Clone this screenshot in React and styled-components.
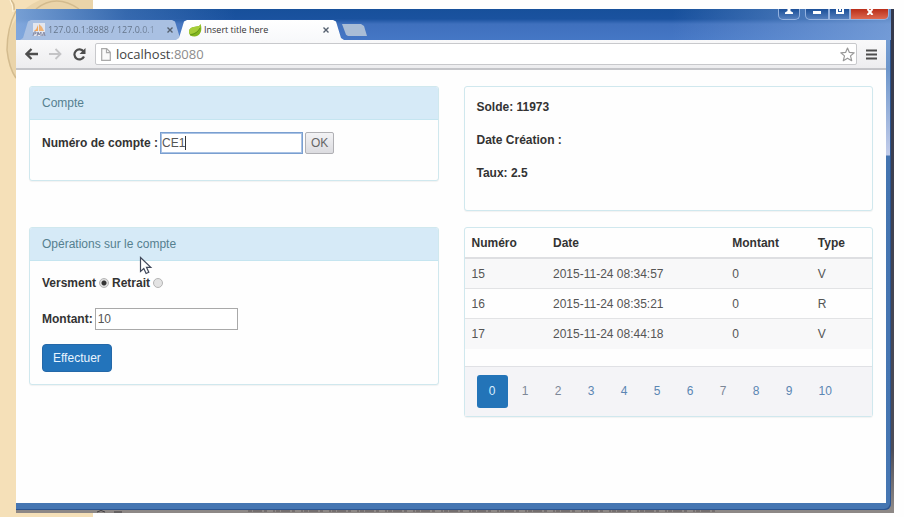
import React, { useState } from "react";
import styled, { createGlobalStyle } from "styled-components";

const GlobalStyle = createGlobalStyle`
  *, *::before, *::after { box-sizing: border-box; }
  body {
    margin: 0;
    background: #fefefe;
    color: #333;
    font: 12px/17px "Liberation Sans", Arial, sans-serif;
  }
  button, input { font: inherit; color: inherit; }
`;

/* Desktop and window */

const Desktop = styled.div`
  display: flex;
  min-height: 100vh;
  padding: 9px 10px 4px 16px;
  position: relative;
  background: linear-gradient(90deg, #f5e0b8 0 93px, #fefefe 93px);
`;

const Ornament = styled.svg`
  position: absolute;
  top: 0;
  left: 0;
  width: 93px;
  height: 100px;
`;

const Shadow = styled.div`
  flex: 1;
  display: flex;
  flex-direction: column;
  position: relative;
  min-width: 0;
  background: linear-gradient(180deg, #33384c 0, #4c4c58 440px, #8d8886 500px);
  padding-right: 3px;
`;

const Backdrop = styled.svg`
  display: block;
  width: 100%;
  height: 3px;
`;

const Window = styled.div`
  flex: 1;
  display: flex;
  flex-direction: column;
  border-radius: 0 0 6px 0;
  background: linear-gradient(180deg, #7ea6dc 0, #6d96cb 60px, #c3cdea 146px, #4474b0 147px, #4676b2 100%);
  padding: 0 5px 7px 0;
  box-shadow: inset -1px -1px 0 #2c5490;
`;

const TitleBar = styled.header`
  display: flex;
  align-items: flex-end;
  height: 31px;
  margin-right: -5px;
  padding-left: 4px;
  background:
    linear-gradient(90deg, rgba(150, 185, 230, 0.75) 0, rgba(120, 160, 215, 0.3) 110px, transparent 220px, transparent 75%, rgba(140, 175, 225, 0.65) 100%),
    linear-gradient(180deg, #17509b 0, #1a529f 10px, #3f70bd 15px, #4577c5 100%);
`;

const Tab = styled.div`
  display: flex;
  align-items: center;
  gap: 2px;
  height: 20px;
  width: ${(p) => (p.$active ? 168 : 163)}px;
  margin-right: ${(p) => (p.$active ? 0 : -7)}px;
  padding: 0 ${(p) => (p.$active ? 12 : 7)}px 0 12px;
  background: ${(p) => (p.$active ? "linear-gradient(#fff, #f8f9fb)" : "#a9c0e2")};
  color: ${(p) => (p.$active ? "#333" : "#65758c")};
  clip-path: polygon(0 100%, 3px 90%, 8px 8%, 11px 0, calc(100% - 11px) 0, calc(100% - 8px) 8%, calc(100% - 3px) 90%, 100% 100%);
  font: 9px/16px "Open Sans", sans-serif;
`;

const TabTitle = styled.span`
  flex: 1;
  white-space: nowrap;
  mask-image: ${(p) => (p.$fade ? "linear-gradient(90deg, #000 80%, rgba(0, 0, 0, 0.3))" : "none")};
`;

const TabClose = styled.button`
  display: flex;
  padding: 3px;
  border: 0;
  background: none;
  color: #55606f;
`;

const NewTab = styled.button`
  width: 25px;
  height: 12px;
  margin: 0 0 4px -2px;
  padding: 0;
  border: 0;
  background: #a9bdd6;
  clip-path: polygon(0 0, 19px 0, 22px 2px, 100% 100%, 6px 100%, 4px 90%);
`;

const Controls = styled.div`
  display: flex;
  align-self: flex-start;
  margin-left: auto;
  padding-right: 2px;
`;

const Control = styled.button`
  display: flex;
  justify-content: center;
  align-items: flex-start;
  width: ${(p) => p.$width}px;
  height: 11px;
  margin-right: ${(p) => (p.$spaced ? 5 : 0)}px;
  padding: 0;
  border: 1px solid #94b2df;
  border-width: 0 1px 1px;
  border-radius: ${(p) => p.$radius};
  background: ${(p) => (p.$danger ? "linear-gradient(#b92d18, #dd6951)" : "linear-gradient(#1b4f98, #547fbd)")};
  color: #fff;
`;

const Toolbar = styled.div`
  display: flex;
  align-items: center;
  height: 30px;
  padding: 3px 7px 3px 7px;
  background: linear-gradient(180deg, #f9f9fa, #ededef);
  border-bottom: 2px solid #c4c5c9;
`;

const ToolButton = styled.button`
  display: flex;
  width: 16px;
  margin-right: 8px;
  padding: 0;
  justify-content: center;
  border: 0;
  background: none;
  color: ${(p) => (p.disabled ? "#c4c4c6" : "#4d4d4d")};
  &:last-child { margin-right: 0; }
`;

const AddressBar = styled.div`
  flex: 1;
  display: flex;
  align-items: center;
  gap: 5px;
  height: 22px;
  margin-right: 6px;
  padding: 0 1px 0 5px;
  border: 1px solid #c8c9cc;
  border-radius: 2px;
  background: #fff;
`;

const Address = styled.span`
  flex: 1;
  color: #444;
  font: 13px/18px "Open Sans", sans-serif;
`;

const Port = styled.span`
  color: #8c8c8c;
`;

/* Page */

const Page = styled.main`
  flex: 1;
  display: grid;
  grid-template-columns: minmax(0, 1fr) minmax(0, 1fr);
  gap: 16px 25px;
  align-content: start;
  align-items: start;
  padding: 16px 13px;
  background: #fefefe;
`;

const Panel = styled.section`
  position: relative;
  border: 1px solid #d0e8ee;
  border-radius: 3px;
  background: #fefefe;
  box-shadow: 0 1px 1px rgba(0, 0, 0, 0.05);
`;

const PanelHeading = styled.h2`
  margin: 0;
  padding: 8px 12px;
  border-bottom: 1px solid #c5e5f0;
  border-radius: 2px 2px 0 0;
  background: #d6eaf7;
  color: #55808f;
  font-size: 12px;
  font-weight: 400;
  line-height: 16px;
`;

const PanelBody = styled.div`
  padding: 12px;
`;

const FormRow = styled.div`
  display: flex;
  align-items: center;
  gap: 2px;
  margin-bottom: 14px;
`;

const RadioRow = styled.div`
  display: flex;
  align-items: center;
  gap: 2px;
  height: 20px;
  margin-bottom: 15px;
`;

const Label = styled.label`
  font-weight: 700;
`;

const InputWrap = styled.span`
  position: relative;
  display: flex;
`;

const TextInput = styled.input`
  width: 143px;
  height: 22px;
  padding: 0 2px;
  border: 1px solid #a9a9a9;
  outline: 0;
  background: #fff;
  color: #555;
  ${(p) => p.$focused && "border-color: #7a9fd0; box-shadow: inset 0 0 0 1px #a9c2e4; padding: 0 1px;"}
`;

const Caret = styled.span`
  position: absolute;
  top: 4px;
  left: 25px;
  width: 1px;
  height: 14px;
  background: #333;
`;

const Radio = styled.input`
  appearance: none;
  width: 10px;
  height: 10px;
  margin: 0 1px;
  border: 1px solid #b5b5b5;
  border-radius: 50%;
  background: #e3e3e3;
  &:checked { background: radial-gradient(circle, #333 0 2px, #dedede 3px); }
`;

const PlainButton = styled.button`
  height: 22px;
  padding: 0 5px;
  border: 1px solid #b0b0b4;
  border-radius: 2px;
  background: linear-gradient(#f3f3f5, #dcdce0);
  color: #666;
`;

const PrimaryButton = styled.button`
  display: block;
  height: 28px;
  padding: 0 10px;
  border: 1px solid #2468a8;
  border-radius: 4px;
  background: #2374bb;
  color: #e9f4ff;
`;

const Fact = styled.p`
  margin: 0 0 16px;
  font-weight: 700;
`;

const Table = styled.table`
  width: 100%;
  margin-bottom: 17px;
  table-layout: fixed;
  border-collapse: separate;
  border-spacing: 0;
`;

const Th = styled.th`
  width: ${(p) => p.$width};
  height: 31px;
  padding: 1px 7px 0;
  border-bottom: 2px solid #dedfe2;
  text-align: left;
`;

const Td = styled.td`
  height: 30px;
  padding: 1px 7px 0;
  border-bottom: 1px solid #e2e3e5;
  color: #555;
  tr:nth-child(odd) > & { background: #f8f8f9; }
  tr:last-child > & { border-bottom: 0; }
`;

const Pagination = styled.nav`
  display: flex;
  gap: 2px;
  padding: 8px 12px;
  border-top: 1px solid #e0e1e5;
  background: #f4f4f7;
`;

const PageLink = styled.a`
  min-width: 31px;
  padding: 8px 12px;
  border-radius: 3px;
  text-align: center;
  text-decoration: none;
  background: ${(p) => (p.$active ? "#2374b8" : "transparent")};
  color: ${(p) => (p.$active ? "#d8efff" : p.$visited ? "#7d8797" : "#5b86b3")};
`;

const Pointer = styled.svg`
  position: absolute;
  left: 109px;
  top: 28px;
  pointer-events: none;
`;

/* Icons */

const CloseGlyph = () => (
  <svg width="6" height="6" viewBox="0 0 6 6" aria-hidden="true">
    <path d="M.5.5l5 5M5.5.5l-5 5" stroke="currentColor" strokeWidth="1.4" />
  </svg>
);

const AdminIcon = () => (
  <svg width="14" height="14" viewBox="0 0 14 14" aria-hidden="true">
    <rect x="1" width="12" height="13" fill="#e3e6ee" />
    <path d="M6 2v6H2q3-2 4-6z" fill="#f2a65a" />
    <path d="M7 1q4 3 5 7H7z" fill="#eeb377" />
    <path d="M1 13l1-4h2q1 2-2 2M5 13l1-4 1 3 2-3v4M10 13l2-4 1 4M11 12h2" fill="none" stroke="#8187a3" />
  </svg>
);

const LeafIcon = () => (
  <svg width="14" height="13" viewBox="0 0 14 13" aria-hidden="true">
    <path d="M1 8C1 3.500 5 3 8.500 2.500 11 2.200 12 1.500 12.700 0 14.500 6 12.500 12.500 6.500 12.500 3 12.500 1 11 1 8z" fill="#82b51f" />
    <path d="M1 8C1 3.500 5 3 8.500 2.500 11 2.200 12 1.500 12.700 0 13 5 9 9 2 10z" fill="#a6cd39" />
    <path d="M2 11Q9 10 12 4" fill="none" stroke="#5d8f18" strokeWidth=".8" />
  </svg>
);

const ArrowIcon = ({ right }) => (
  <svg width="13" height="12" viewBox="0 0 13 12" aria-hidden="true">
    <path
      d={right ? "M0 6h11M6.500 1l5 5-5 5" : "M13 6H2M6.500 1l-5 5 5 5"}
      fill="none"
      stroke="currentColor"
      strokeWidth={right ? 1.8 : 2.3}
    />
  </svg>
);

const ReloadIcon = () => (
  <svg width="13" height="13" viewBox="0 0 13 13" aria-hidden="true">
    <path d="M10.500 3.500A5 5 0 1 0 11 8.500" fill="none" stroke="currentColor" strokeWidth="2.200" />
    <path d="M12.500 0v6h-6z" fill="currentColor" />
  </svg>
);

const FileIcon = () => (
  <svg width="10" height="13" viewBox="0 0 10 13" aria-hidden="true">
    <path d="M.7.7h5L9.300 4.300v8H.7zM5.500.7v4h4" fill="#fafafa" stroke="#a9a9a9" strokeWidth="1.200" />
  </svg>
);

const StarIcon = () => (
  <svg width="15" height="15" viewBox="0 0 15 15" aria-hidden="true">
    <path d="M7.500 1l1.900 4.400 4.800.4-3.700 3.100 1.200 4.800-4.200-2.500-4.200 2.500 1.200-4.800L.8 5.800l4.800-.4z" fill="#fff" stroke="#999" strokeWidth="1.200" strokeLinejoin="round" />
  </svg>
);

const MenuIcon = () => (
  <svg width="11" height="11" viewBox="0 0 11 11" aria-hidden="true">
    <path d="M0 1.500h11M0 5.500h11M0 9.500h11" stroke="currentColor" strokeWidth="2" />
  </svg>
);

const operations = [
  { id: 15, date: "2015-11-24 08:34:57", amount: 0, type: "V" },
  { id: 16, date: "2015-11-24 08:35:21", amount: 0, type: "R" },
  { id: 17, date: "2015-11-24 08:44:18", amount: 0, type: "V" },
];

const pages = [0, 1, 2, 3, 4, 5, 6, 7, 8, 9, 10];
const visitedPages = [1, 2, 7];

export default function App() {
  const [kind, setKind] = useState("V");
  const [account, setAccount] = useState("CE1");

  return (
    <>
      <GlobalStyle />
      <Desktop>
        <Ornament viewBox="0 0 93 100" aria-hidden="true">
          <path d="M93 0H40Q8 14 7 48q1 22 9 31h77z" fill="#ead4a9" />
          <path d="M11 0q4 4 3 10M16 11Q7 28 7 50q2 18 9 28M36 9q20-16 43 0" fill="none" stroke="#d3bb8e" strokeWidth="1.500" />
          <path d="M10 0q3 5 3 12" stroke="#fff5dc" fill="none" />
        </Ornament>
        <Shadow>
          <Window>
            <TitleBar>
              <Tab>
                <AdminIcon />
                <TabTitle $fade>127.0.0.1:8888 / 127.0.0.1</TabTitle>
                <TabClose aria-label="Fermer l'onglet"><CloseGlyph /></TabClose>
              </Tab>
              <Tab $active>
                <LeafIcon />
                <TabTitle>Insert title here</TabTitle>
                <TabClose aria-label="Fermer l'onglet"><CloseGlyph /></TabClose>
              </Tab>
              <NewTab aria-label="Nouvel onglet" />
              <Controls>
                <Control $width={22} $spaced $radius="0 0 5px 5px" aria-label="Utilisateur">
                  <svg width="8" height="5" viewBox="0 0 8 5"><path d="M2.500 0h3v2L8 3.500V5H0V3.500L2.500 2z" fill="currentColor" /></svg>
                </Control>
                <Control $width={24} $radius="0 0 0 5px" aria-label="Réduire">
                  <svg width="8" height="5" viewBox="0 0 8 5"><path d="M0 3.500h8" stroke="currentColor" strokeWidth="3" /></svg>
                </Control>
                <Control $width={21} $radius="0" aria-label="Agrandir">
                  <svg width="8" height="5" viewBox="0 0 8 5"><path d="M1 0v4h6V0M3 1h2" fill="none" stroke="currentColor" strokeWidth="2" /></svg>
                </Control>
                <Control $width={39} $danger $radius="0 0 5px 0" aria-label="Fermer">
                  <svg width="8" height="6" viewBox="0 0 8 6"><path d="M1.500 0L6.500 6M6.500 0L1.500 6" stroke="currentColor" strokeWidth="2" /></svg>
                </Control>
              </Controls>
            </TitleBar>
            <Toolbar>
              <ToolButton aria-label="Retour"><ArrowIcon /></ToolButton>
              <ToolButton aria-label="Suivant" disabled><ArrowIcon right /></ToolButton>
              <ToolButton aria-label="Actualiser"><ReloadIcon /></ToolButton>
              <AddressBar>
                <FileIcon />
                <Address>localhost<Port>:8080</Port></Address>
                <StarIcon />
              </AddressBar>
              <ToolButton aria-label="Menu"><MenuIcon /></ToolButton>
            </Toolbar>
            <Page>
              <Panel>
                <PanelHeading>Compte</PanelHeading>
                <PanelBody>
                  <FormRow>
                    <Label htmlFor="account">Numéro de compte :</Label>
                    <InputWrap>
                      <TextInput id="account" $focused value={account} onChange={(e) => setAccount(e.target.value)} />
                      {account === "CE1" && <Caret />}
                    </InputWrap>
                    <PlainButton type="button">OK</PlainButton>
                  </FormRow>
                </PanelBody>
              </Panel>

              <Panel>
                <PanelBody>
                  <Fact>Solde: 11973</Fact>
                  <Fact>Date Création :</Fact>
                  <Fact>Taux: 2.5</Fact>
                </PanelBody>
              </Panel>

              <Panel>
                <PanelHeading>Opérations sur le compte</PanelHeading>
                <PanelBody>
                  <RadioRow>
                    <Label htmlFor="deposit">Versment</Label>
                    <Radio id="deposit" type="radio" name="kind" checked={kind === "V"} onChange={() => setKind("V")} />
                    <Label htmlFor="withdrawal">Retrait</Label>
                    <Radio id="withdrawal" type="radio" name="kind" checked={kind === "R"} onChange={() => setKind("R")} />
                  </RadioRow>
                  <FormRow>
                    <Label htmlFor="amount">Montant:</Label>
                    <TextInput id="amount" defaultValue="10" />
                  </FormRow>
                  <PrimaryButton type="button">Effectuer</PrimaryButton>
                </PanelBody>
                <Pointer width="14" height="19" viewBox="0 0 14 19" aria-hidden="true">
                  <path d="M1.500 1.500v14l3.300-3 2.300 5 2.700-1.200-2.300-5h4.300z" fill="#fff" stroke="#41485a" strokeWidth="1.200" />
                </Pointer>
              </Panel>

              <Panel>
                <Table>
                  <thead>
                    <tr>
                      <Th $width="20%">Numéro</Th>
                      <Th $width="44%">Date</Th>
                      <Th $width="21%">Montant</Th>
                      <Th $width="15%">Type</Th>
                    </tr>
                  </thead>
                  <tbody>
                    {operations.map((op) => (
                      <tr key={op.id}>
                        <Td>{op.id}</Td>
                        <Td>{op.date}</Td>
                        <Td>{op.amount}</Td>
                        <Td>{op.type}</Td>
                      </tr>
                    ))}
                  </tbody>
                </Table>
                <Pagination aria-label="Pages">
                  {pages.map((n) => (
                    <PageLink key={n} href={`#${n}`} $active={n === 0} $visited={visitedPages.includes(n)}>
                      {n}
                    </PageLink>
                  ))}
                </Pagination>
              </Panel>
            </Page>
          </Window>
          <Backdrop aria-hidden="true">
            <path d="M232 1H702" stroke="#5a5557" strokeWidth="1" strokeDasharray="4 1 9 2 3 6 2 1" />
            <path d="M81 2q4-3 8 0M98 2h8" stroke="#3f3c40" fill="none" />
          </Backdrop>
        </Shadow>
      </Desktop>
    </>
  );
}
